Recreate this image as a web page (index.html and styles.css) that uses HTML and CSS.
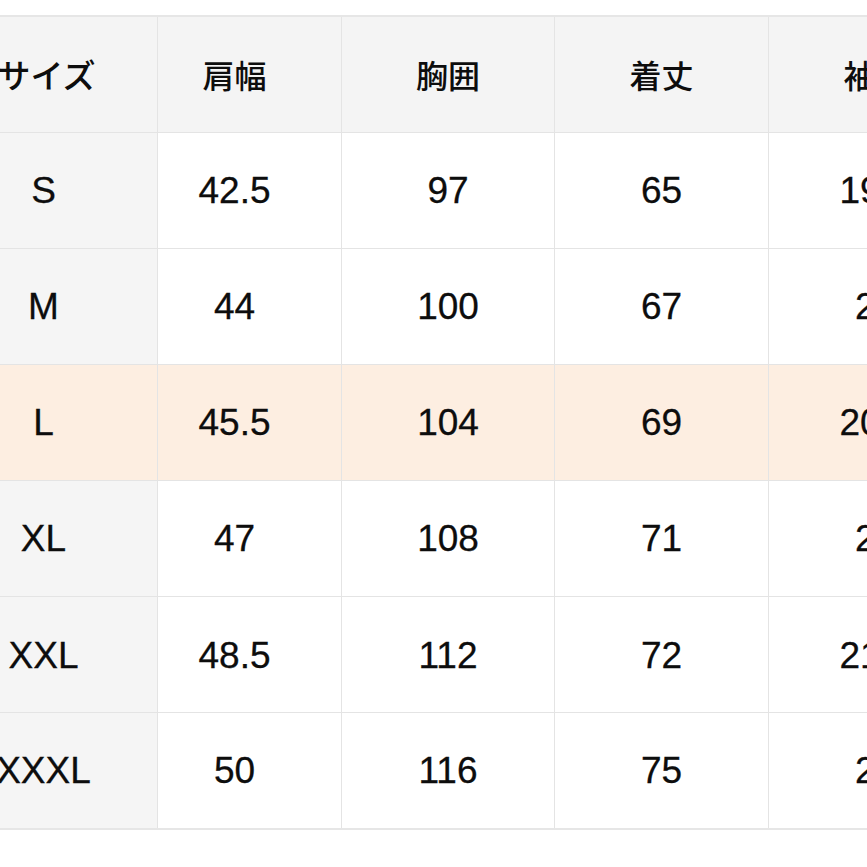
FILE: index.html
```html
<!DOCTYPE html>
<html lang="ja">
<head>
<meta charset="utf-8">
<title>サイズ表</title>
<link rel="stylesheet" href="styles.css">
</head>
<body>
<div class="frame">
  <table class="size-table">
    <colgroup>
      <col class="c-size">
      <col class="c-shoulder">
      <col class="c-chest">
      <col class="c-length">
      <col class="c-sleeve">
    </colgroup>
    <thead>
      <tr>
        <th class="head size-head">サイズ</th>
        <th class="head shoulder">肩幅</th>
        <th class="head">胸囲</th>
        <th class="head">着丈</th>
        <th class="head">袖丈</th>
      </tr>
    </thead>
    <tbody>
      <tr>
        <td class="size">S</td><td class="shoulder">42.5</td><td>97</td><td>65</td><td>19.5</td>
      </tr>
      <tr>
        <td class="size">M</td><td class="shoulder">44</td><td>100</td><td>67</td><td>20</td>
      </tr>
      <tr class="highlight">
        <td class="size">L</td><td class="shoulder">45.5</td><td>104</td><td>69</td><td>20.5</td>
      </tr>
      <tr>
        <td class="size">XL</td><td class="shoulder">47</td><td>108</td><td>71</td><td>21</td>
      </tr>
      <tr>
        <td class="size">XXL</td><td class="shoulder">48.5</td><td>112</td><td>72</td><td>21.5</td>
      </tr>
      <tr>
        <td class="size">XXXL</td><td class="shoulder">50</td><td>116</td><td>75</td><td>22</td>
      </tr>
    </tbody>
  </table>
</div>
</body>
</html>
```
FILE: styles.css
```css
html, body {
  margin: 0;
  padding: 0;
  background: #ffffff;
}

.frame {
  width: 867px;
  height: 867px;
  overflow: hidden;
  padding-top: 15px;
  box-sizing: border-box;
}

.size-table {
  margin-left: -71px;
  border-collapse: collapse;
  table-layout: fixed;
  width: 1053px;
  font-family: "Liberation Sans", "Noto Sans CJK JP", sans-serif;
  color: #0d0d0d;
}

.c-size { width: 228px; }
.c-shoulder { width: 184px; }
.c-chest { width: 213px; }
.c-length { width: 214px; }
.c-sleeve { width: 214px; }

.size-table th,
.size-table td {
  height: 116.1px;
  padding: 2px 0 0 0;
  border: 1px solid #e4e4e4;
  text-align: center;
  vertical-align: middle;
  font-size: 37px;
  font-weight: normal;
  box-sizing: border-box;
  -webkit-text-stroke: 0.3px #0d0d0d;
}

.size-table thead th {
  border-top: 2px solid #e6e6e6;
  padding-top: 0;
}

.size-table tbody tr:last-child td {
  border-bottom: 2px solid #e6e6e6;
}

.size-table th.head {
  background: #f4f4f4;
  font-family: "Noto Sans CJK JP", sans-serif;
  font-size: 32px;
  font-weight: 500;
  line-height: 1;
  -webkit-text-stroke: 0;
}

.size-table th.size-head {
  font-size: 33px;
  padding-left: 6px;
}

.size-table .shoulder {
  padding-right: 30px;
}

.size-table td.size {
  background: #f5f5f5;
}

.size-table tr.highlight td,
.size-table tr.highlight td.size {
  background: #fdeee1;
}
```
